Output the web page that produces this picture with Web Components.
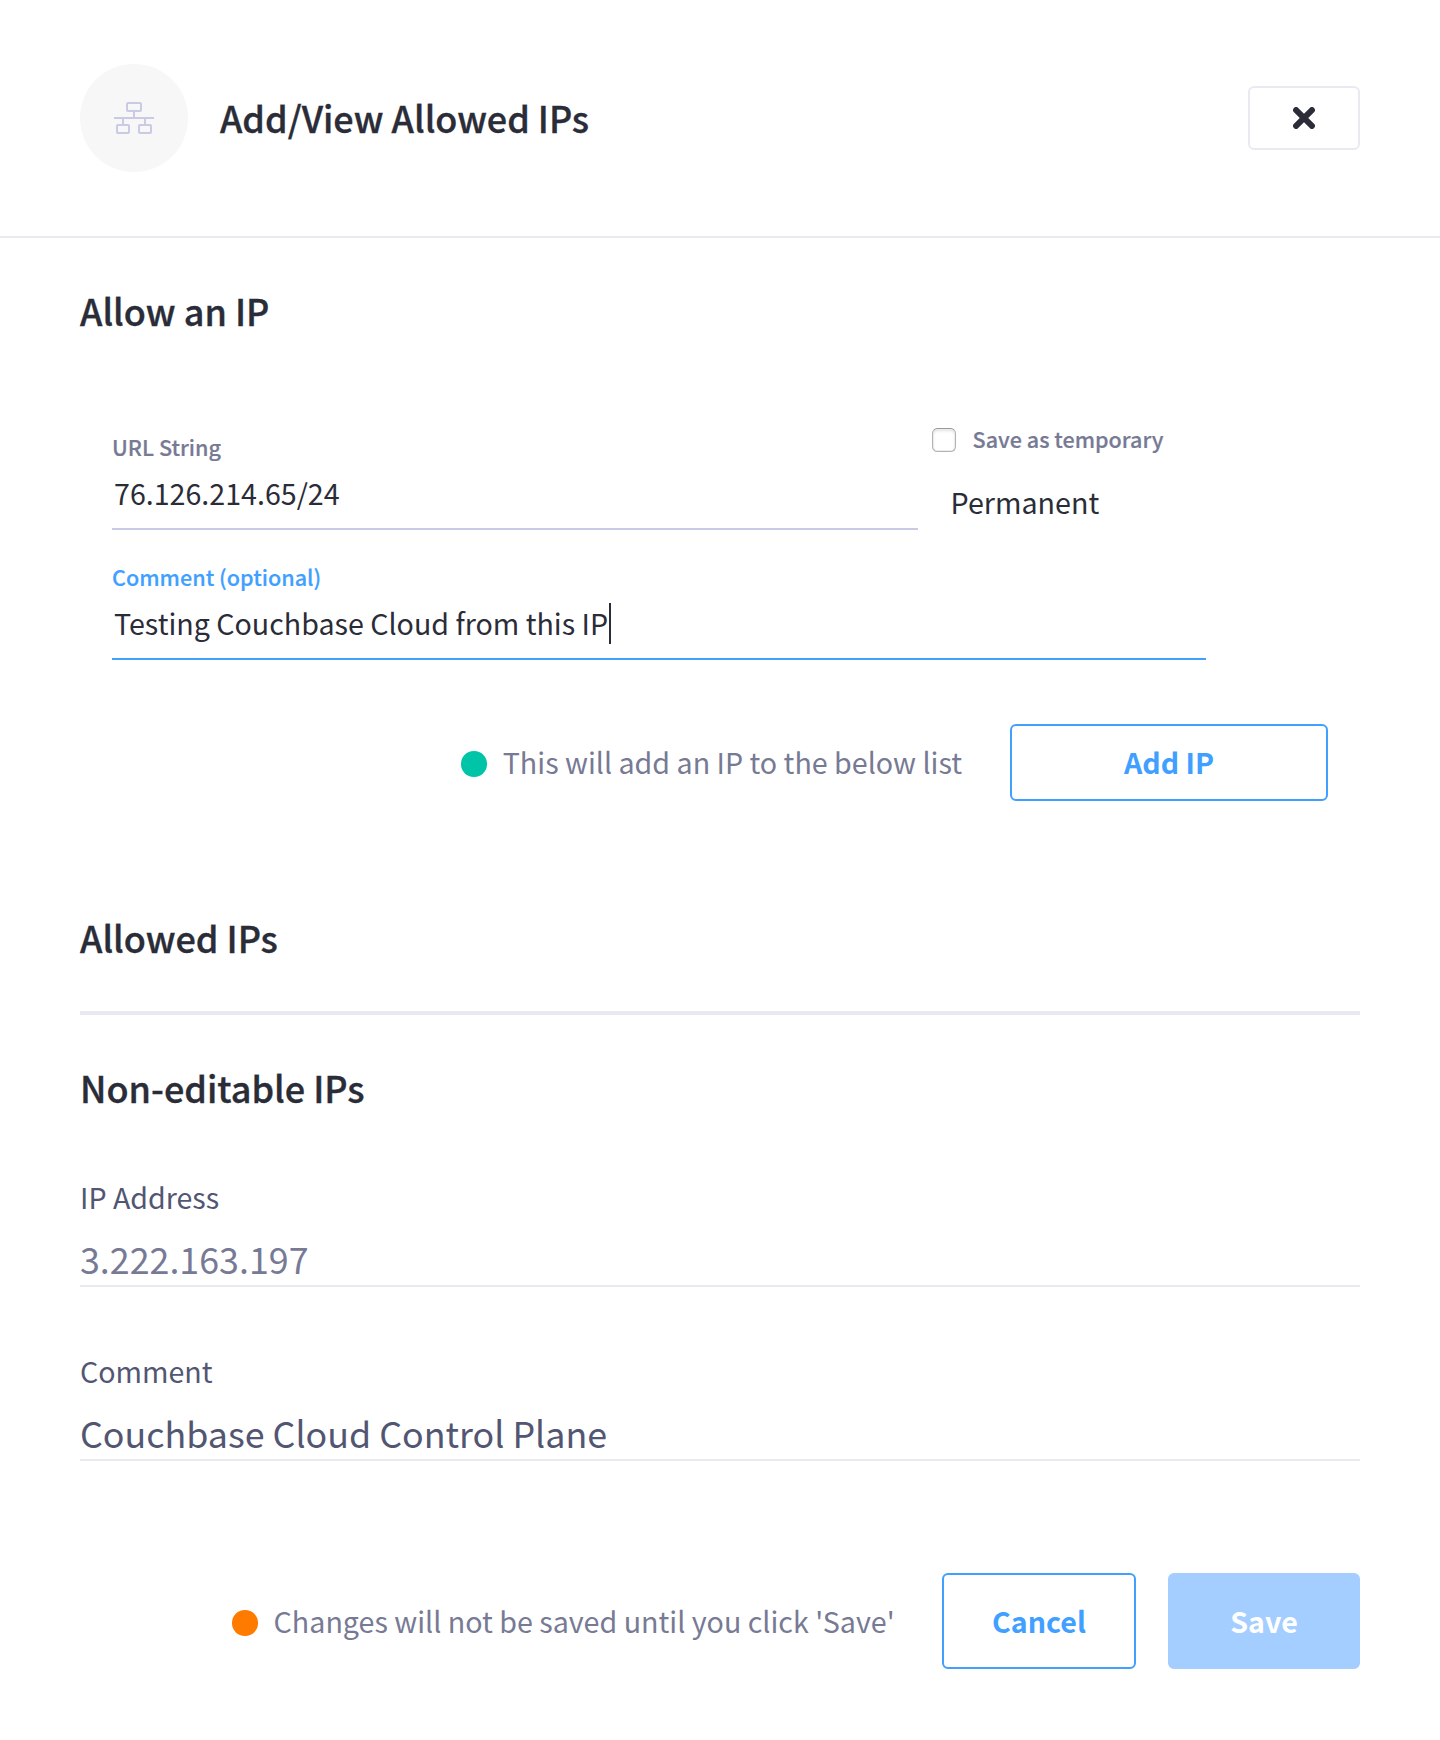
<!DOCTYPE html>
<html lang="en">
<head>
<meta charset="utf-8">
<title>Add/View Allowed IPs</title>
<style>
body{margin:0;background:#fff;color:#2a2c38;font-family:"Noto Sans CJK SC","Noto Sans",sans-serif;
--ink:#2a2c38;--slate:#525672;--muted:#777a94;--rule:#e9e9f2;--line:#c9cae3;--blue:#409fff}
</style>
</head>
<body>
<ip-panel></ip-panel>
<script>
const define = (name, html) => customElements.define(name, class extends HTMLElement {
  constructor() {
    super();
    const t = document.createElement('template');
    t.innerHTML = html;
    this.attachShadow({mode: 'open'}).append(t.content.cloneNode(true));
  }
});

define('network-icon', `
<style>:host{display:flex;align-items:center;justify-content:center;width:108px;height:108px;border-radius:50%;background:#f7f7f7}svg{display:block}</style>
<svg width="40" height="32" viewBox="0 0 40 32" fill="none" stroke="#c9cae3" stroke-width="2">
<rect x="13" y="1" width="14" height="8" rx="1"/>
<path d="M20 10v5M0 16h40M9 17v5M31 17v5"/>
<rect x="3" y="23" width="12" height="8" rx="1"/>
<rect x="25" y="23" width="12" height="8" rx="1"/>
</svg>`);

define('close-button', `
<style>:host{display:flex;align-items:center;justify-content:center;box-sizing:border-box;width:112px;height:64px;border:2px solid var(--rule);border-radius:6px}svg{display:block}</style>
<svg width="22" height="22" viewBox="0 0 22 22" fill="none" stroke="#2a2c38" stroke-width="6" stroke-linecap="round"><path d="M3.1 3.1l15.8 15.8M18.9 3.1L3.1 18.9"/></svg>`);

define('panel-header', `
<style>:host{display:flex;align-items:flex-start;box-sizing:border-box;height:238px;padding:64px 80px 0;border-bottom:2px solid var(--rule)}
.row{display:flex;align-items:center;flex:1}
h1{flex:1;margin:0 0 2px 32px;font-size:35.95px;line-height:48px;font-weight:500;color:var(--ink);-webkit-text-stroke:.35px}</style>
<div class="row"><network-icon></network-icon><h1><slot></slot></h1><close-button></close-button></div>`);

define('section-title', `
<style>:host{display:block}h2{margin:0;font-size:36px;line-height:48px;font-weight:500;color:var(--ink);-webkit-text-stroke:.35px}</style>
<h2><slot></slot></h2>`);

define('text-field', `
<style>:host{display:block;border-bottom:2px solid var(--line);padding-bottom:15px;color:var(--muted)}
:host([focused]){border-color:var(--blue);color:var(--blue)}
.label{font-size:21.6px;line-height:31px;font-weight:500;-webkit-text-stroke:.2px}
.value{display:flex;margin-top:10px;padding-left:2px;height:41px;font-size:28.62px;line-height:41px;color:var(--ink)}
.caret{display:none;width:2px;height:41px;margin:1px 0 -1px .5px;background:var(--ink)}
:host([focused]) .caret{display:block}</style>
<div class="label"><slot name="label"></slot></div>
<div class="value"><slot></slot><span class="caret"></span></div>`);

define('check-option', `
<style>:host{display:flex;align-items:center;gap:16.6px;font-size:21.55px;line-height:31px;font-weight:500;color:var(--muted);-webkit-text-stroke:.2px}
.box{box-sizing:border-box;width:24px;height:24px;margin-top:3px;border:1px solid #b2b2b2;border-top-color:#999;border-radius:5.5px;background:#fff;box-shadow:inset 0 0 0 1px #ededed,inset 0 2px 3px #e2e2e2}</style>
<span class="box"></span><span><slot></slot></span>`);

define('status-note', `
<style>:host{display:flex;align-items:center;gap:16px;font-size:28.65px;line-height:41px;color:var(--muted)}
.dot{width:25.5px;height:25.5px;margin-top:5px;border-radius:50%;background:var(--dot)}</style>
<span class="dot"></span><span><slot></slot></span>`);

define('action-button', `
<style>:host{display:block;box-sizing:border-box;border:2px solid var(--blue);border-radius:6px;padding-top:var(--pad,25px);text-align:center;font-size:28.6px;line-height:41px;font-weight:700;color:var(--blue)}
:host([disabled]){background:#a3ceff;border-color:#a3ceff;color:#fff}</style>
<slot></slot>`);

define('read-field', `
<style>:host{display:block;border-bottom:2px solid var(--rule);padding-bottom:3px;color:var(--slate)}
.label{font-size:28.6px;line-height:41px}
.value{margin-top:17px;font-size:35.8px;line-height:48px;color:var(--value,inherit)}</style>
<div class="label"><slot name="label"></slot></div>
<div class="value"><slot></slot></div>`);

define('add-ip-form', `
<style>:host{display:flex;flex-direction:column;padding:0 32px}
.row{display:flex;align-items:flex-start;gap:14px}
.url{width:806px;margin-top:8px}
.mode{display:flex;flex-direction:column;gap:27px}
.permanent{padding-left:18.6px;font-size:28.65px;line-height:41px;color:var(--ink)}
.comment{width:1094px;margin-top:31px}
.actions{display:flex;justify-content:flex-end;gap:48px;margin-top:64px}
status-note{--dot:#00c4a7;height:41px;margin-top:17px}
action-button{width:318px;height:77px;--pad:15px}</style>
<div class="row">
<text-field class="url"><span slot="label">URL String</span>76.126.214.65/24</text-field>
<div class="mode"><check-option>Save as temporary</check-option><div class="permanent">Permanent</div></div>
</div>
<text-field class="comment" focused><span slot="label">Comment (optional)</span>Testing Couchbase Cloud from this IP</text-field>
<div class="actions"><status-note>This will add an IP to the below list</status-note><action-button>Add IP</action-button></div>`);

define('panel-footer', `
<style>:host{display:flex;justify-content:flex-end;gap:32px}
status-note{--dot:#ff7b00;height:41px;margin:27px 15.4px 0 0}
action-button{width:194px;height:96px}
action-button[disabled]{width:192px}</style>
<status-note>Changes will not be saved until you click 'Save'</status-note>
<action-button>Cancel</action-button><action-button disabled>Save</action-button>`);

define('ip-panel', `
<style>:host{display:block;min-height:1740px}
main{display:flex;flex-direction:column;padding:48px 80px 0}
add-ip-form{margin-top:89px}
.allowed{margin-top:112px;padding-bottom:50px;border-bottom:4px solid var(--rule)}
.fixed{margin-top:48px}
.address{margin-top:65px;--value:var(--muted)}
.note{margin-top:63px}
panel-footer{margin-top:112px}</style>
<panel-header>Add/View Allowed IPs</panel-header>
<main>
<section-title>Allow an IP</section-title>
<add-ip-form></add-ip-form>
<section-title class="allowed">Allowed IPs</section-title>
<section-title class="fixed">Non-editable IPs</section-title>
<read-field class="address"><span slot="label">IP Address</span>3.222.163.197</read-field>
<read-field class="note"><span slot="label">Comment</span>Couchbase Cloud Control Plane</read-field>
<panel-footer></panel-footer>
</main>`);
</script>
</body>
</html>
